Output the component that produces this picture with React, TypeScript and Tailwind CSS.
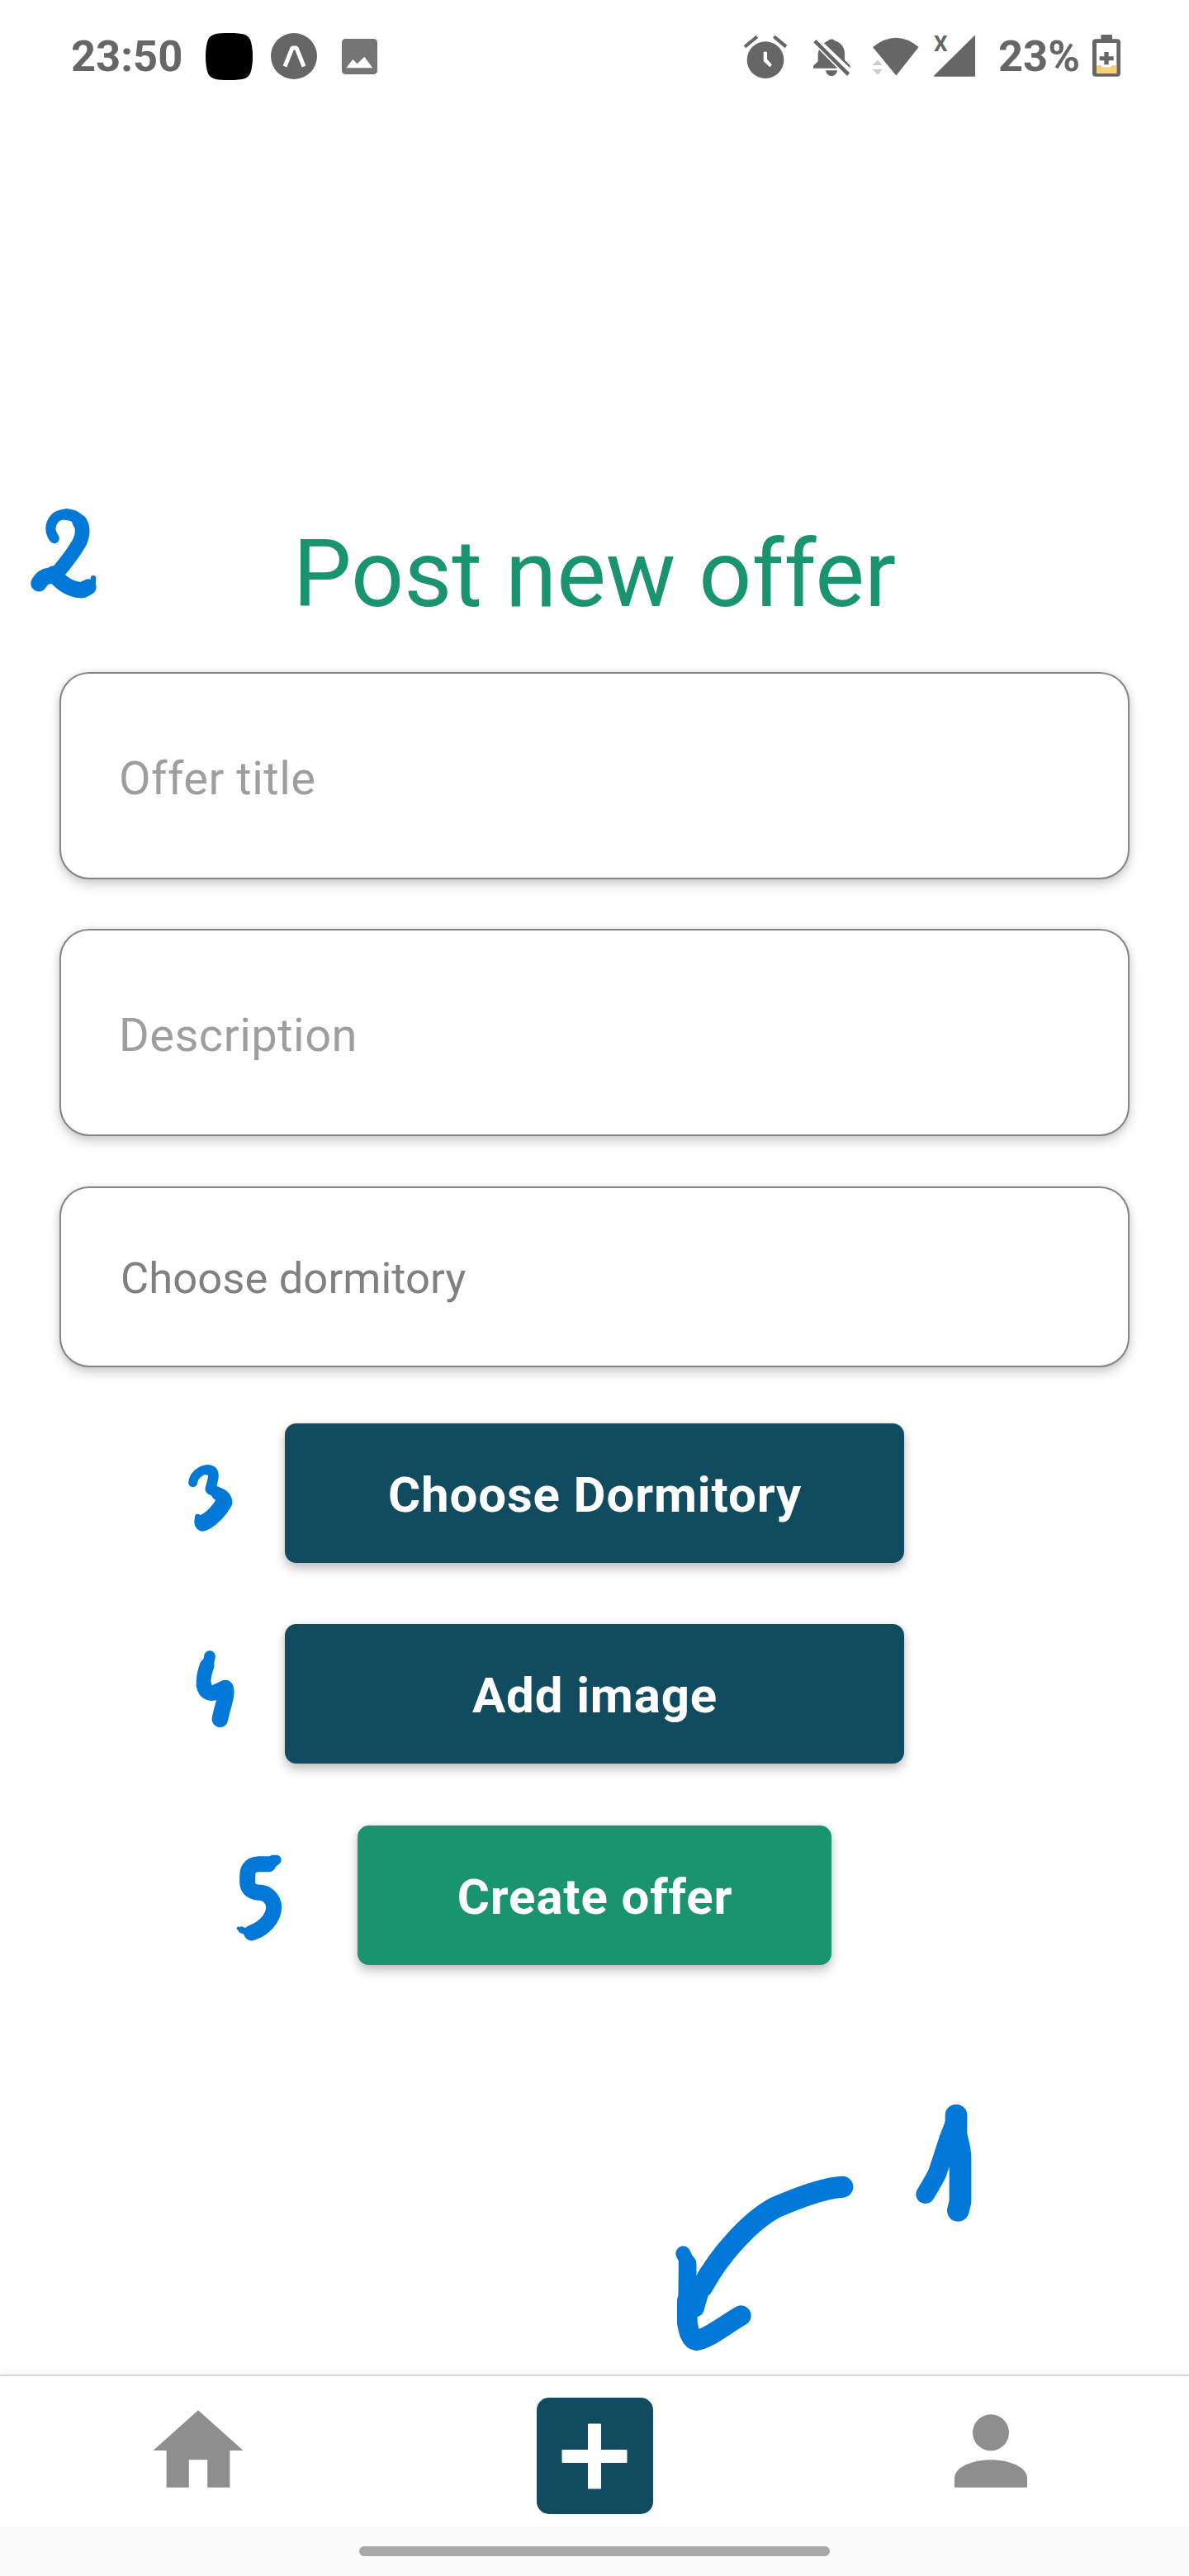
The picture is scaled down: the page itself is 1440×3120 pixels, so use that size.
import React from "react";

function StatusBar() {
  return (
    <header className="flex h-[136px] items-start pl-[86px] pr-[82px] pt-10 text-[52.5px] font-bold leading-[56px] text-[#666666]">
      <span className="w-[163px] whitespace-nowrap">23:50</span>
      <svg className="h-[57px] w-[57px]" viewBox="0 0 57 57">
        <path d="M28.5 0C46 0 51 2 54 8c2 5 3 12 3 20.500S56 44 54 49c-3 6-8 8-25.500 8S6 55 3 49c-2-5-3-12-3-20.500S1 13 3 8C6 2 11 0 28.500 0z" fill="#000" />
      </svg>
      <svg className="ml-[22px] h-14 w-14" viewBox="0 0 56 56">
        <circle cx="28" cy="28" r="28" fill="#666" />
        <path d="M17 40.500l9-22.500h5l9 22.500" fill="none" stroke="#fff" strokeWidth="5" strokeLinejoin="bevel" />
      </svg>
      <svg className="ml-[30px] mt-[7px] h-[43px] w-[43px]" viewBox="0 0 43 43">
        <rect width="43" height="43" rx="4.500" fill="#757575" />
        <path d="M5.300 35.300l8-10.300 5.400 5.300 8.600-8.600 10 13.600z" fill="#fff" />
      </svg>
      <div className="grow" />
      <svg className="mt-[2px] h-[54px] w-[54px]" viewBox="60 66 162 162" fill="#666">
        <circle cx="141" cy="158" r="67" />
        <path d="M62 106L107 68l8 9-45 38zM168 77l8-9 44 36-8 11z" />
        <path d="M134 128h13v27l18 20-8 9-23-22z" fill="#fff" />
      </svg>
      <svg className="ml-[30px] mt-[7px] h-[46px] w-[46px]" viewBox="312 81 138 138" fill="#666">
        <path d="M316 94l9-10 122 121-9 11z" />
        <path d="M336 121l67 67h-88v-9l17-16v-24c0-7 1-12 4-18z" />
        <path d="M354 97c5-4 10-7 16-9 1-7 21-7 22 0 25 7 37 25 37 46v24l19 18v11z" />
        <path d="M360 196h42c-3 27-39 27-42 0z" />
      </svg>
      <svg className="ml-[26px] mt-[5px] h-[47px] w-[57px]" viewBox="528 75 171 141" fill="#666">
        <path d="M613 211L531 111q85-68 167 0l-79 100q-3 4-6 0z" />
        <path d="M530 177l19-19 17 19zM531 192h35l-17 20z" fill="#ccc" />
      </svg>
      <div className="relative ml-[17px] mt-[2px] h-[52px] w-[52px]">
        <svg className="h-[52px] w-[52px]" viewBox="750 66 156 156">
          <path d="M753 215L900 70q3-2 3 1v144q0 3-3 3H755q-3 0-2-3z" fill="#666" />
        </svg>
        <span className="absolute left-px top-[-2px] text-[26px] font-bold leading-[26px]">X</span>
      </div>
      <span className="ml-[27px] w-[113px] whitespace-nowrap">23%</span>
      <svg className="mt-[2px] h-[52px] w-[36px]" viewBox="1326 66 108 156">
        <path d="M1360 82V70q0-4 4-4h33q4 0 4 4v12h18q12 0 12 12v112q0 12-12 12h-78q-12 0-12-12V94q0-12 12-12z" fill="#666" />
        <path d="M1344 96h73v110h-73z" fill="#fff" />
        <path d="M1344 178h19v6h34v-6h20v28h-73z" fill="#f8d07a" />
        <path d="M1372 129h16v16h18v15h-18v15h-16v-15h-17v-15h17z" fill="#666" />
      </svg>
    </header>
  );
}

const fieldBase =
  "flex w-full items-center rounded-[36px] border-2 border-[#848484] bg-white shadow-[0_7px_13px_rgba(0,0,0,0.17),0_0_9px_rgba(0,0,0,0.1)]";

const buttonBase =
  "flex h-[169px] items-center justify-center rounded-[14px] pt-1 pl-px text-[60px] font-bold leading-none tracking-[0.85px] text-white shadow-[0_7px_13px_rgba(0,0,0,0.23),0_0_8px_rgba(0,0,0,0.08)]";

function OfferForm() {
  return (
    <main className="flex grow flex-col items-center px-[72px] pt-[490px]">
      <h1 className="mb-12 text-[112.5px] leading-[140px] text-[#1a936f]">Post new offer</h1>
      <div className={`${fieldBase} h-[251px] pl-[70px] pt-[7px] text-[56px] tracking-[0.5px] text-[#9e9e9e]`}>Offer title</div>
      <div className={`${fieldBase} mt-[60px] h-[251px] pl-[70px] pt-[7px] text-[56px] tracking-[0.5px] text-[#9e9e9e]`}>Description</div>
      <div className={`${fieldBase} mt-[61px] h-[219px] pl-[72px] pt-[4px] text-[52.5px] tracking-[0.1px] text-[#808080]`}>Choose dormitory</div>
      <button className={`${buttonBase} mt-[68px] w-[750px] bg-[#114b5f]`}>Choose Dormitory</button>
      <button className={`${buttonBase} mt-[74px] w-[750px] bg-[#114b5f]`}>Add image</button>
      <button className={`${buttonBase} mt-[75px] w-[574px] bg-[#1a936f]`}>Create offer</button>
    </main>
  );
}

function TabBar() {
  return (
    <nav className="grid h-[184px] grid-cols-3 justify-items-center border-t-2 border-[#d8d8d8] bg-white shadow-[0_-2px_10px_rgba(0,0,0,0.06)]">
      <svg className="mt-[41px] h-[94px] w-[110px]" viewBox="0 0 110 94">
        <path d="M55 .300L109.500 49H93.400v44.700H66.200V60.300H43.800v33.400H16.600V49H.500z" fill="#8e8e8e" />
      </svg>
      <div className="mt-[26px] flex h-[141px] w-[141px] items-center justify-center rounded-[15px] bg-[#114b5f]">
        <svg className="h-20 w-20" viewBox="0 0 80 80" fill="#fff">
          <rect x="32" y=".500" width="16" height="79" rx="1" />
          <rect x=".500" y="32" width="79" height="16" rx="1" />
        </svg>
      </div>
      <svg className="mt-[46px] h-[89px] w-[88px]" viewBox="0 0 88 89" fill="#8e8e8e">
        <circle cx="44" cy="22.300" r="22" />
        <path d="M0 88.700V77.500C0 64 22 55.300 44 55.300S88 64 88 77.500v11.200z" />
      </svg>
    </nav>
  );
}

/* Pen marks drawn over the screen: numbered steps and an arrow to the add tab. */
function PenMarks() {
  return (
    <svg
      className="pointer-events-none absolute left-0 top-0 h-[3120px] w-[1440px]"
      viewBox="0 0 1440 3120"
      fill="none"
      stroke="#0078d8"
      strokeLinecap="round"
      strokeLinejoin="round"
    >
      <g transform="translate(0 590) scale(.33333)">
        <path d="M197 186C181 165 179 138 197 116C213 96 245 94 275 110" strokeWidth="37" />
        <path d="M240 99C262 100 280 110 291 123" strokeWidth="42" />
        <path d="M288 125C301 141 304 170 289 200C268 240 235 280 203 318" strokeWidth="53" />
        <path d="M141 350C150 335 160 324 178 323" strokeWidth="59" />
        <path d="M195 315C230 360 270 376 300 374L321 363" strokeWidth="58" />
        <path d="M339 331L338 350" strokeWidth="20" />
      </g>
      <g transform="translate(200 1700) scale(.33333)">
        <path d="M101 287C103 262 130 240 152 239" strokeWidth="33" />
        <path d="M154 241C190 243 171 280 165 310" strokeWidth="38" />
        <path d="M166 311L188 322" strokeWidth="40" />
        <path d="M192 328C218 338 224 352 213 370" strokeWidth="48" />
        <path d="M214 358C200 385 170 420 137 434" strokeWidth="60" />
        <path d="M118 411L116 430" strokeWidth="20" />
      </g>
      <g transform="translate(200 1700) scale(.33333)">
        <path d="M162 918C160 935 154 950 150 965" strokeWidth="41" />
        <path d="M152 952C142 980 138 1010 141 1025" strokeWidth="53" />
        <path d="M141 1024C147 1052 165 1056 185 1048L218 1033" strokeWidth="56" />
        <path d="M219 1034C227 1060 208 1100 199 1147" strokeWidth="59" />
      </g>
      <g transform="translate(260 2200) scale(.33333)">
        <path d="M224 158L212 166" strokeWidth="36" />
        <path d="M213 162L198 172" strokeWidth="44" />
        <path d="M196 173L160 173C128 174 119 195 119 215V240C120 266 140 277 165 277C195 279 215 305 215 330C214 370 180 408 134 423" strokeWidth="57" />
        <path d="M86 407L110 418" strokeWidth="12" />
        <path d="M98 412L125 424" strokeWidth="24" />
      </g>
      <g transform="translate(780 2520) scale(.33333)">
        <path d="M721 386C660 390 560 425 475 462C390 508 278 625 212 748" strokeWidth="78" />
        <path d="M213 740L187 828" strokeWidth="62" />
        <path d="M142 628L155 655" strokeWidth="54" />
        <path d="M158 665L156 860" strokeWidth="65" />
        <path d="M157 800V880C162 910 170 942 190 944C230 940 290 890 352 854" strokeWidth="74" />
        <path d="M1132 145L1105 215L1066 335C1055 360 1035 390 1022 413" strokeWidth="68" />
        <path d="M1134 126V190C1135 215 1149 240 1149 280V440L1141 472" strokeWidth="80" />
      </g>
    </svg>
  );
}

export default function App() {
  return (
    <div className="relative flex h-[3120px] w-[1440px] flex-col overflow-hidden bg-white font-['Roboto',sans-serif]">
      <StatusBar />
      <OfferForm />
      <TabBar />
      <div className="flex h-[60px] items-start justify-center bg-[#fafafa] pt-6">
        <div className="h-3 w-[570px] rounded-full bg-[#a8a8a8]" />
      </div>
      <PenMarks />
    </div>
  );
}
